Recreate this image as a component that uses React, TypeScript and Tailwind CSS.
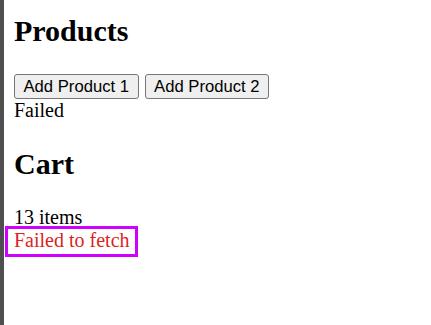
const serif = "font-['Liberation_Serif','Times_New_Roman',serif]";

function ProductButton({ label }: { label: string }) {
  return (
    <button
      type="button"
      className="h-[25px] px-[8.5px] py-[2px] border border-[#767676] rounded-[3px] bg-[#efefef] text-black text-[16.67px] leading-[19px] font-['Liberation_Sans',Arial,sans-serif]"
    >
      {label}
    </button>
  );
}

export default function App() {
  return (
    <div className={`flex h-[325px] w-[431px] bg-white text-black overflow-hidden ${serif}`}>
      <div className="w-[4px] shrink-0 bg-[#4f4f4f]" />
      <div className="flex flex-col items-start pl-[10px] text-[20px] leading-[23px]">
        <h2 className="mt-[14.4px] mb-[24.9px] text-[30px] leading-[34.5px] font-bold">Products</h2>
        <div className="flex items-start gap-[6px]">
          <ProductButton label="Add Product 1" />
          <ProductButton label="Add Product 2" />
        </div>
        <div>Failed</div>
        <h2 className="mt-[24.9px] mb-[24.9px] text-[30px] leading-[34.5px] font-bold">Cart</h2>
        <div>13 items</div>
        <div className="-mt-[3px] -ml-[9px] w-[133px] border-[3px] border-[#d000ff] pl-[6px] pb-[2px] text-[#dd1f1f]">
          Failed to fetch
        </div>
      </div>
    </div>
  );
}
